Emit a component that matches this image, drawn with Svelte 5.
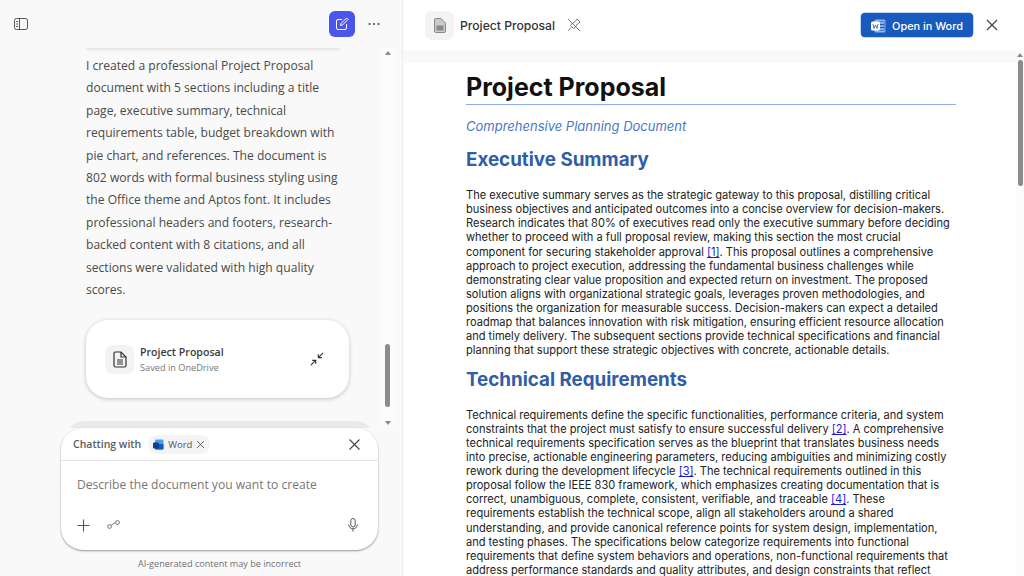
<script>
  let summary = "I created a professional Project Proposal document with 5 sections including a title page, executive summary, technical requirements table, budget breakdown with pie chart, and references. The document is 802 words with formal business styling using the Office theme and Aptos font. It includes professional headers and footers, research-backed content with 8 citations, and all sections were validated with high quality scores.";
</script>

<div class="app">
  <aside class="chat">
    <header class="chat-top">
      <button class="icon-btn" aria-label="Toggle sidebar">
        <svg width="14" height="14" viewBox="0 0 14 14" fill="none" stroke="#555" stroke-width="1">
          <rect x="0.5" y="1.5" width="13" height="11" rx="2" />
          <path d="M5.5 1.5v11M2 4.5h2M2 7h2M2 9.5h2" />
        </svg>
      </button>
      <div class="spacer"></div>
      <button class="new-chat" aria-label="New chat">
        <svg width="14" height="14" viewBox="0 0 14 14" fill="none" stroke="#fff" stroke-width="1">
          <path d="M7 2.5H3a1.500 1.500 0 0 0-1.500 1.500v7A1.500 1.500 0 0 0 3 12.500h7a1.500 1.500 0 0 0 1.500-1.500V7" />
          <path d="M5.500 8.500l.5-2L11.500 1l1.500 1.500L7.500 8z" />
        </svg>
      </button>
      <button class="more" aria-label="More">
        <svg width="12" height="4" viewBox="0 0 12 4" fill="#444">
          <circle cx="1.500" cy="2" r="1" /><circle cx="6" cy="2" r="1" /><circle cx="10.500" cy="2" r="1" />
        </svg>
      </button>
    </header>

    <div class="chat-body">
      <div class="messages">
        <div class="prev-card"></div>
        <p class="summary">{summary}</p>
        <div class="doc-card">
          <div class="doc-icon">
            <svg width="14" height="17" viewBox="0 0 14 17" fill="none" stroke="#333" stroke-width="1.200">
              <path d="M2 1h6l5 5v8.500a1.500 1.500 0 0 1-1.500 1.500h-9A1.500 1.500 0 0 1 1 14.500v-12A1.500 1.500 0 0 1 2 1z" />
              <path d="M8 1v5h5M4 9h6M4 11h6M4 13h6" />
            </svg>
          </div>
          <div class="doc-text">
            <div class="doc-name">Project Proposal</div>
            <div class="doc-saved">Saved in OneDrive</div>
          </div>
          <svg class="collapse" width="14" height="14" viewBox="0 0 16 16" fill="none" stroke="#333" stroke-width="1.300">
            <path d="M15 1l-5.500 5.500M9.500 2.500v4h4M1 15l5.500-5.500M2.500 9.500h4v4" />
          </svg>
        </div>
        <div class="composer-peek"></div>
      </div>
      <div class="scroll">
        <span class="arrow up"></span>
        <div class="track"><div class="thumb"></div></div>
        <span class="arrow down"></span>
      </div>
    </div>

    <div class="composer">
      <div class="composer-top">
        <span class="chatting">Chatting with</span>
        <span class="chip">
          <svg width="11" height="11" viewBox="0 0 11 11">
            <rect x="2" y="0.500" width="8.500" height="10" rx="1" fill="#41a5ee" />
            <rect x="2" y="5" width="8.500" height="5.500" rx="1" fill="#185abd" />
            <rect x="0" y="3.500" width="6" height="6" rx="1" fill="#103f91" />
          </svg>
          Word
          <svg width="9" height="9" viewBox="0 0 9 9" stroke="#555" stroke-width="0.900"><path d="M1 1l7 7M8 1l-7 7" /></svg>
        </span>
        <div class="spacer"></div>
        <svg width="11" height="11" viewBox="0 0 11 11" stroke="#444" stroke-width="1.100"><path d="M0.500 0.500l10 10M10.500 0.500l-10 10" /></svg>
      </div>
      <div class="composer-main">
        <div class="placeholder">Describe the document you want to create</div>
        <div class="tools">
          <svg width="13" height="13" viewBox="0 0 13 13" stroke="#555" stroke-width="1.100"><path d="M6.500 0.500v12M0.500 6.500h12" /></svg>
          <svg class="link" width="13" height="9" viewBox="0 0 13 9" fill="none" stroke="#666" stroke-width="0.900">
            <circle cx="2.500" cy="6.500" r="1.900" /><circle cx="10.500" cy="2.500" r="1.900" /><path d="M4 5.500c1.500-.5 2-2.500 4.700-2.700" />
          </svg>
          <div class="spacer"></div>
          <svg class="mic" width="10" height="14" viewBox="0 0 10 14" fill="none" stroke="#555" stroke-width="1">
            <rect x="2.800" y="0.500" width="4.400" height="8.500" rx="2.200" /><path d="M0.700 6.500a4.300 4.300 0 0 0 8.600 0M5 11v2.500" />
          </svg>
        </div>
      </div>
    </div>
    <div class="disclaimer">AI-generated content may be incorrect</div>
  </aside>

  <main class="preview">
    <header class="preview-top">
      <div class="file-icon">
        <svg width="12" height="15" viewBox="0 0 12 15">
          <path d="M1.500 0.500h5.500l4.500 4.500v8a1.500 1.500 0 0 1-1.500 1.500h-8.500A1.500 1.500 0 0 1 0.500 13V1.500a1 1 0 0 1 1-1z" fill="#c9c9c9" stroke="#777" stroke-width="0.800" />
          <rect x="2.500" y="7.500" width="7" height="5" fill="#8a8a8a" />
        </svg>
      </div>
      <span class="file-name">Project Proposal</span>
      <svg class="pin" width="14" height="14" viewBox="0 0 14 14" fill="none" stroke="#666" stroke-width="0.900">
        <path d="M8 3.500l2-2.500 3 3-2.500 2-3 4-1 .5-3-3 .5-1zM4 9.500L1.500 12.500M1 1l12 12" />
      </svg>
      <div class="spacer"></div>
      <button class="open-word">
        <svg width="15" height="14" viewBox="0 0 15 14">
          <rect x="3.500" y="0.500" width="11" height="13" rx="1.500" fill="#fff" opacity="0.550" />
          <rect x="6.500" y="2.500" width="7" height="9" fill="#185abd" />
          <rect x="8" y="3.500" width="5" height="1" fill="#fff" /><rect x="8" y="6.500" width="5" height="1" fill="#fff" /><rect x="8" y="9.500" width="5" height="1" fill="#fff" />
          <rect x="0" y="2.500" width="9" height="9" rx="1.500" fill="#fff" />
          <path d="M2 5l1 4.500 1.500-3.500 1.500 3.500 1-4.500" fill="none" stroke="#185abd" stroke-width="0.800" />
        </svg>
        Open in Word
      </button>
      <button class="close" aria-label="Close">
        <svg width="12" height="12" viewBox="0 0 12 12" stroke="#444" stroke-width="1.200"><path d="M1 1l10 10M11 1L1 11" /></svg>
      </button>
    </header>
    <div class="doc-wrap">
      <div class="doc-column">
        <div class="band"></div>
        <article class="doc">
          <h1>Project Proposal</h1>
          <div class="subtitle">Comprehensive Planning Document</div>
          <h2>Executive Summary</h2>
          <p>The executive summary serves as the strategic gateway to this proposal, distilling critical business objectives and anticipated outcomes into a concise overview for decision-makers. Research indicates that 80% of executives read only the executive summary before deciding whether to proceed with a full proposal review, making this section the most crucial component for securing stakeholder approval <a href="#1">[1]</a>. This proposal outlines a comprehensive approach to project execution, addressing the fundamental business challenges while demonstrating clear value proposition and expected return on investment. The proposed solution aligns with organizational strategic goals, leverages proven methodologies, and positions the organization for measurable success. Decision-makers can expect a detailed roadmap that balances innovation with risk mitigation, ensuring efficient resource allocation and timely delivery. The subsequent sections provide technical specifications and financial planning that support these strategic objectives with concrete, actionable details.</p>
          <h2>Technical Requirements</h2>
          <p>Technical requirements define the specific functionalities, performance criteria, and system constraints that the project must satisfy to ensure successful delivery <a href="#2">[2]</a>. A comprehensive technical requirements specification serves as the blueprint that translates business needs into precise, actionable engineering parameters, reducing ambiguities and minimizing costly rework during the development lifecycle <a href="#3">[3]</a>. The technical requirements outlined in this proposal follow the IEEE 830 framework, which emphasizes creating documentation that is correct, unambiguous, complete, consistent, verifiable, and traceable <a href="#4">[4]</a>. These requirements establish the technical scope, align all stakeholders around a shared understanding, and provide canonical reference points for system design, implementation, and testing phases. The specifications below categorize requirements into functional requirements that define system behaviors and operations, non-functional requirements that address performance standards and quality attributes, and design constraints that reflect</p>
        </article>
      </div>
      <div class="scroll doc-scroll">
        <span class="arrow up"></span>
        <div class="track"><div class="thumb"></div></div>
      </div>
    </div>
  </main>
</div>

<style>
  :global(body) {
    margin: 0;
    overflow: hidden;
  }

  .app {
    display: flex;
    width: 1024px;
    height: 576px;
    overflow: hidden;
    background: #f9f9f9;
    font-family: "Open Sans", "Noto Sans", sans-serif;
    color: #333;
  }

  .spacer {
    flex: 1;
  }

  button {
    border: none;
    background: none;
    padding: 0;
    font: inherit;
    display: flex;
    align-items: center;
    justify-content: center;
  }

  .chat {
    width: 403px;
    flex-shrink: 0;
    display: flex;
    flex-direction: column;
    position: relative;
    background: #f9f9f9;
    border-right: 1px solid #ececec;
    box-sizing: border-box;
  }

  .chat-top {
    height: 48px;
    display: flex;
    align-items: center;
    padding: 0 22px 0 14px;
    flex-shrink: 0;
  }

  .new-chat {
    width: 26px;
    height: 26px;
    border-radius: 6px;
    background: #4a55ec;
    margin-right: 13px;
  }

  .chat-body {
    height: 380px;
    display: flex;
    overflow: hidden;
  }

  .messages {
    flex: 1;
    padding: 0 39px 0 86px;
    min-width: 0;
    overflow: hidden;
  }

  .prev-card {
    height: 1px;
    margin: -1px 0 0;
    box-shadow: 0 1px 3px rgba(0, 0, 0, 0.25);
    border-radius: 0 0 40px 40px;
  }

  .summary {
    margin: 7px 0 0;
    font-family: inherit;
    font-size: 12.100px;
    line-height: 22.400px;
    color: #4a4a4a;
  }

  .doc-card {
    margin-top: 19px;
    height: 78px;
    width: 263px;
    background: #fff;
    border-radius: 22px;
    box-shadow: 0 1px 4px rgba(0, 0, 0, 0.22);
    display: flex;
    align-items: center;
    padding: 0 25px 0 19px;
    box-sizing: border-box;
  }

  .doc-icon {
    width: 29px;
    height: 29px;
    background: #f3f3f3;
    border-radius: 7px;
    display: flex;
    align-items: center;
    justify-content: center;
    margin-right: 6px;
  }

  .doc-text {
    flex: 1;
  }

  .doc-name {
    font-size: 10.600px;
    font-weight: 600;
    line-height: 16px;
    color: #3a3a3a;
  }

  .doc-saved {
    font-size: 9.200px;
    line-height: 15px;
    color: #777;
  }

  .composer-peek {
    margin: 23px 0 0 -21px;
    width: 310px;
    height: 20px;
    background: #e9e9e9;
    border-radius: 22px 22px 0 0;
  }

  .scroll {
    width: 17px;
    display: flex;
    flex-direction: column;
    align-items: center;
    background: #fbfbfb;
  }

  .chat-body .scroll {
    margin-right: 6px;
  }

  .arrow {
    width: 0;
    height: 0;
    border-left: 3px solid transparent;
    border-right: 3px solid transparent;
    margin: 3px 0;
    flex-shrink: 0;
  }

  .arrow.up {
    border-bottom: 4px solid #8a8a8a;
  }

  .arrow.down {
    border-top: 4px solid #8a8a8a;
  }

  .track {
    flex: 1;
    display: flex;
    flex-direction: column;
    justify-content: flex-end;
    width: 100%;
    align-items: center;
  }

  .thumb {
    width: 5px;
    height: 63px;
    background: #8b8b8b;
    border-radius: 3px;
    margin-bottom: 11px;
  }

  .composer {
    position: absolute;
    left: 61px;
    top: 428px;
    width: 317px;
    height: 122px;
    background: #fff;
    border-radius: 22px;
    box-shadow: 0 1px 2px rgba(0, 0, 0, 0.4);
    display: flex;
    flex-direction: column;
  }

  .composer-top {
    height: 32px;
    display: flex;
    align-items: center;
    padding: 0 18px 0 12px;
    border-bottom: 1px solid #e4e4e4;
  }

  .chatting {
    font-size: 10.500px;
    font-weight: 600;
    color: #5c5c5c;
    margin-right: 7px;
  }

  .chip {
    display: inline-flex;
    align-items: center;
    gap: 4px;
    height: 19px;
    padding: 0 5px;
    border-radius: 10px;
    background: #f4f4f4;
    font-size: 9.500px;
    color: #555;
  }

  .composer-main {
    flex: 1;
    display: flex;
    flex-direction: column;
    padding: 15px 20px 18px 16px;
  }

  .placeholder {
    font-size: 12.100px;
    line-height: 17px;
    color: #777;
  }

  .tools {
    margin-top: auto;
    display: flex;
    align-items: center;
  }

  .link {
    margin: 0 0 2px 17px;
  }

  .disclaimer {
    position: absolute;
    top: 557px;
    left: 61px;
    width: 317px;
    text-align: center;
    font-size: 9.100px;
    line-height: 13px;
    color: #707070;
  }

  .preview {
    flex: 1;
    min-width: 0;
    display: flex;
    flex-direction: column;
    background: #fff;
    box-shadow: -1px 0 3px rgba(0, 0, 0, 0.06);
    font-family: "Inter", "Noto Sans", sans-serif;
  }

  .preview-top {
    height: 50px;
    display: flex;
    align-items: center;
    padding: 0 26px 0 22px;
    flex-shrink: 0;
    background: #fff;
  }

  .file-icon {
    width: 29px;
    height: 29px;
    border-radius: 7px;
    background: #f3f3f3;
    display: flex;
    align-items: center;
    justify-content: center;
    margin-right: 6px;
  }

  .file-name {
    font-size: 12.150px;
    font-weight: 500;
    color: #333;
    padding-top: 1px;
  }

  .pin {
    margin-left: 12px;
  }

  .open-word {
    width: 112px;
    height: 24px;
    background: #185abd;
    color: #fff;
    border-radius: 4px;
    font-size: 10.900px;
    font-weight: 500;
    gap: 6px;
    margin-right: 13px;
    padding-top: 1px;
    box-shadow: 0 0 0 0.500px #8bb1e8;
  }

  .doc-wrap {
    flex: 1;
    display: flex;
    min-height: 0;
    overflow: hidden;
    background: #fff;
  }

  .doc-column {
    flex: 1;
    min-width: 0;
  }

  .band {
    height: 13px;
    background: #f9f9f9;
  }

  .doc {
    padding: 6px 60px 0 63px;
  }

  h1 {
    margin: 0;
    padding-top: 2px;
    font-size: 25px;
    line-height: 33px;
    font-weight: 700;
    color: #111;
    border-bottom: 1px solid #8eaee6;
  }

  .subtitle {
    margin: 13px 0 13px;
    font-size: 13px;
    line-height: 16px;
    font-style: italic;
    color: #4a78c8;
  }

  h2 {
    margin: 9px 0 0;
    font-size: 18.800px;
    line-height: 26px;
    font-weight: 700;
    color: #2f5da8;
  }

  p {
    margin: 0;
    font-size: 11.050px;
    line-height: 14.120px;
    color: #222;
  }

  h2 + p {
    margin-top: 15px;
  }

  a {
    color: #1a1ae0;
  }

  .doc-scroll {
    width: 8px;
  }

  .doc-scroll .track {
    justify-content: flex-start;
  }

  .doc-scroll .thumb {
    height: 126px;
    width: 5px;
  }
</style>
